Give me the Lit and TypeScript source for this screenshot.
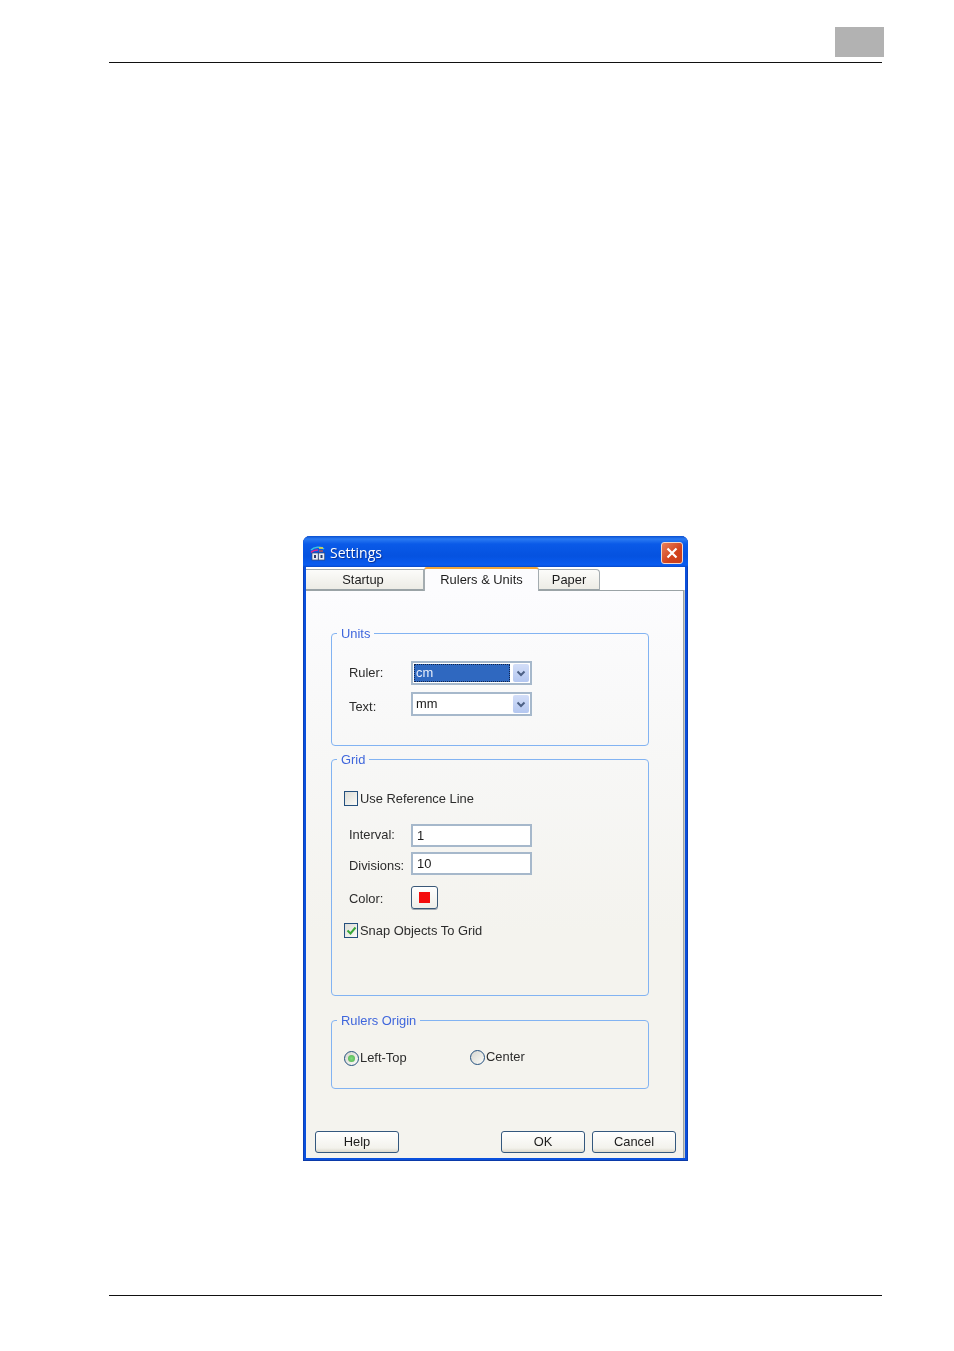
import { LitElement, html, css } from "lit";
import { customElement } from "lit/decorators.js";

const chevron = html`<svg width="10" height="7" viewBox="0 0 10 7"><path d="M1.5 1.5 5 5l3.5-3.5" fill="none" stroke="#4d6185" stroke-width="2"/></svg>`;

@customElement("app-root")
export class AppRoot extends LitElement {
  static styles = css`
    :host { display: block; width: 954px; height: 1351px; background: #fff; overflow: hidden;
      font-family: "Liberation Sans", Arial, sans-serif; font-size: 12.9px; color: #2c2c2c; }
    .tab-mark { width: 49px; height: 30px; margin: 27px 0 0 835px; background: #b2b2b2; }
    .rule { width: 773px; height: 1px; margin-left: 109px; background: #111; }
    .top-rule { margin-top: 5px; }
    .bottom-rule { margin-top: 134px; }
    .window { box-sizing: border-box; width: 385px; height: 625px; margin: 473px 0 0 303px;
      display: flex; flex-direction: column; border-radius: 7px 7px 0 0; background: #0a50dc;
      padding: 0 3px 3px; box-shadow: inset 0 -1px 0 #0b3aa8, inset 1px 0 0 #0b3fb8, inset -1px 0 0 #0b3fb8;
      filter: blur(0.35px); }
    .title { height: 31px; flex: none; display: flex; align-items: center; margin: 0 -3px; padding: 2px 5px 0 7px;
      box-sizing: border-box; border-radius: 7px 7px 0 0;
      background: linear-gradient(#0a4fd0 0, #2a7af2 3px, #0a5ae8 8px, #0552e0 20px, #0a5cf0 29px, #0848c8 31px); }
    .title svg { flex: none; }
    .title-text { margin-left: 4px; color: #fff; font: 500 14px "Open Sans", sans-serif; text-shadow: 1px 1px 1px #0a2f90; flex: 1; }
    .close { width: 22px; height: 22px; box-sizing: border-box; border: 1px solid #f2d8cc; border-radius: 3px;
      background: linear-gradient(135deg, #e9805c, #d2421c 60%, #c8401c); display: flex; align-items: center; justify-content: center; }
    .body { flex: 1; display: flex; flex-direction: column; min-height: 0; background: #f4f3ee; }
    .tabs { height: 23px; flex: none; display: flex; align-items: flex-end; background: #fff; position: relative; }
    .tab { box-sizing: border-box; height: 21px; padding-bottom: 2px; display: flex; align-items: center; justify-content: center;
      border: 1px solid #a4acb0; border-bottom: none; border-left: none; border-radius: 0 4px 0 0; color: #1c1c1c;
      background: linear-gradient(#fcfcfa, #ecebe4); box-shadow: inset 0 -1px 0 #9aa3a6; }
    .startup { width: 118px; border-radius: 0; padding-right: 3px; }
    .rulers { width: 115px; height: 24px; background: #fcfcfe; border-top: 2px solid #f2a63a; border-left: 1px solid #a4acb0;
      border-radius: 3px 3px 0 0; box-shadow: none; margin-bottom: -1px; position: relative; }
    .paper { width: 61px; }
    .panel { flex: 1; min-height: 0; margin-right: 1px; padding: 34px 0 0 25px; display: flex; flex-direction: column;
      border-top: 1px solid #9aa3a6; border-right: 1px solid #9aa3a6; box-shadow: 1px 0 0 #c8c8c4;
      background: linear-gradient(#fcfcfe, #f7f7f6 30%, #f4f3ee 60%); }
    fieldset { box-sizing: border-box; width: 318px; margin: 0; padding: 0; flex: none; min-width: 0;
      border: 1px solid #82b3f2; border-radius: 4px; }
    legend { margin-left: 5px; padding: 2px 4px 0; line-height: 14px; color: #3f66dc; }
    .units { height: 121px; }
    .grid { height: 245px; margin-top: 5px; }
    .origin { height: 77px; margin-top: 16px; }
    .row { display: flex; align-items: center; padding-left: 17px; }
    .label { width: 62px; flex: none; }
    .lower-2 { margin-top: 4px; }
    .lower-1 { margin-top: 2px; }
    .raise-1 { margin-bottom: 2px; }
    .combo, .input { box-sizing: border-box; width: 121px; border: 2px solid #a6b8cb; background: #fff; display: flex; align-items: center; color: #1c1c1c; }
    .combo { height: 24px; padding: 0 1px; justify-content: space-between; }
    .combo-text { flex: 1; padding: 0 0 2px 2px; }
    .selected { background: #2f68c0; color: #e8eefa; height: 18px; line-height: 16px; box-sizing: border-box; border: 1px dotted #10244c; margin-right: 3px; padding: 0 0 0 1px; }
    .arrow { width: 16px; height: 18px; flex: none; border-radius: 2px; background: linear-gradient(#d3def8, #b4c7f0); display: flex; align-items: center; justify-content: center; }
    .input { height: 23px; padding: 0 0 1px 4px; }
    .check-row { display: flex; align-items: center; gap: 2px; padding-left: 12px; }
    .box { box-sizing: border-box; width: 14px; height: 15px; flex: none; border: 1px solid #24507e; background: linear-gradient(135deg, #dcdcd6, #fbfbf8); display: flex; align-items: center; justify-content: center; }
    .radio { width: 15px; border-radius: 50%; background: linear-gradient(135deg, #d6d6d0, #fbfbf8); }
    .dot { width: 7px; height: 7px; border-radius: 50%; background: radial-gradient(#7fdc7f, #50b050); }
    .swatch-btn { box-sizing: border-box; width: 27px; height: 23px; border: 1px solid #3a5878; border-radius: 3px; background: linear-gradient(#fff, #f0efe9); display: flex; align-items: center; justify-content: center; box-shadow: 0 1px 0 #a0a8b0; }
    .swatch { width: 11px; height: 11px; background: #f40c0c; }
    .gap-units-top { margin-top: 20px; }
    .gap-7 { margin-top: 7px; }
    .g1 { margin-top: 24px; }
    .g2 { margin-top: 18px; }
    .g3 { margin-top: 5px; }
    .g4 { margin-top: 11px; }
    .g5 { margin-top: 14px; }
    .origin-row { display: flex; margin-top: 23px; padding-left: 12px; }
    .opt { display: flex; align-items: flex-start; gap: 1px; width: 126px; }
    .opt-text { margin-top: -1px; }
    .opt2 { margin-top: -1px; }
    .buttons { display: flex; margin: 42px 0 0 -16px; }
    .btn { box-sizing: border-box; width: 84px; height: 22px; padding-bottom: 2px; border: 1px solid #34587e; border-radius: 3px; display: flex; align-items: center; justify-content: center;
      background: linear-gradient(#fff, #f3f2ec 80%, #dcd8cc); color: #1c1c1c; }
    .ok { margin-left: 102px; }
    .cancel { margin-left: 7px; }
  `;

  render() {
    return html`
      <div class="tab-mark"></div>
      <div class="rule top-rule"></div>
      <div class="window">
        <div class="title">
          <svg width="16" height="16" viewBox="0 0 16 16">
            <path d="M1 5c3-3 10-4 13-1" fill="none" stroke="#38c0e0" stroke-width="1.6"/>
            <path d="M1 7.5c2-2 5-2.500 7-2.500" fill="none" stroke="#e02888" stroke-width="1.6"/>
            <path d="M9 3h4" stroke="#e8d040" stroke-width="1.6"/>
            <path d="M9 6h4" stroke="#e05030" stroke-width="1.2"/>
            <rect x="2" y="8" width="6.200" height="7" fill="#e8eef8" stroke="#3a4a70" stroke-width=".7"/>
            <rect x="8.500" y="8" width="6.200" height="7" fill="#e8eef8" stroke="#3a4a70" stroke-width=".7"/>
            <rect x="4" y="10" width="2" height="3" fill="#2a3a68"/>
            <rect x="10.500" y="10" width="2" height="3" fill="#2a3a68"/>
          </svg>
          <span class="title-text">Settings</span>
          <div class="close">
            <svg width="12" height="12" viewBox="0 0 12 12"><path d="M1.500 1.500l9 9m0-9l-9 9" stroke="#fff" stroke-width="2.200"/></svg>
          </div>
        </div>
        <div class="body">
          <div class="tabs">
            <div class="tab startup">Startup</div>
            <div class="tab rulers">Rulers &amp; Units</div>
            <div class="tab paper">Paper</div>
          </div>
          <div class="panel">
            <fieldset class="units">
              <legend>Units</legend>
              <div class="row gap-units-top">
                <span class="label raise-1">Ruler:</span>
                <div class="combo"><span class="combo-text selected">cm</span><span class="arrow">${chevron}</span></div>
              </div>
              <div class="row gap-7">
                <span class="label lower-2">Text:</span>
                <div class="combo"><span class="combo-text">mm</span><span class="arrow">${chevron}</span></div>
              </div>
            </fieldset>
            <fieldset class="grid">
              <legend>Grid</legend>
              <div class="check-row g1"><span class="box"></span><span>Use Reference Line</span></div>
              <div class="row g2"><span class="label raise-1">Interval:</span><div class="input">1</div></div>
              <div class="row g3"><span class="label lower-2">Divisions:</span><div class="input">10</div></div>
              <div class="row g4"><span class="label lower-1">Color:</span><div class="swatch-btn"><span class="swatch"></span></div></div>
              <div class="check-row g5">
                <span class="box"><svg width="11" height="11" viewBox="0 0 11 11"><path d="M1.500 5.500 4.500 8.500 9.500 2.500" fill="none" stroke="#3aa83a" stroke-width="2"/></svg></span>
                <span>Snap Objects To Grid</span>
              </div>
            </fieldset>
            <fieldset class="origin">
              <legend>Rulers Origin</legend>
              <div class="origin-row">
                <div class="opt"><span class="box radio"><span class="dot"></span></span><span class="opt-text">Left-Top</span></div>
                <div class="opt opt2"><span class="box radio"></span><span class="opt-text">Center</span></div>
              </div>
            </fieldset>
            <div class="buttons">
              <div class="btn">Help</div>
              <div class="btn ok">OK</div>
              <div class="btn cancel">Cancel</div>
            </div>
          </div>
        </div>
      </div>
      <div class="rule bottom-rule"></div>
    `;
  }
}
